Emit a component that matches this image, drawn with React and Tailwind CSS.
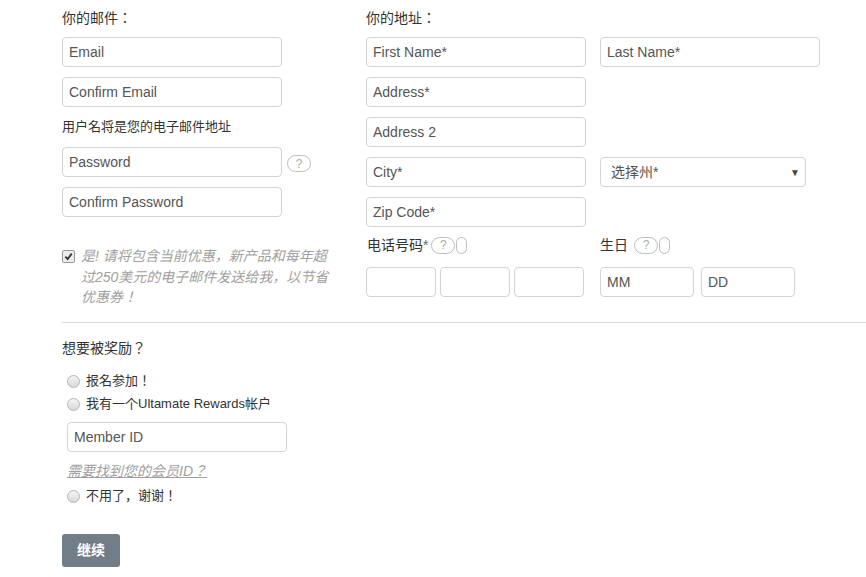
import React from "react";

const font = { fontFamily: '"Liberation Sans", Arial, "Noto Sans CJK JP", "Noto Sans CJK SC", sans-serif' };

function Field({ ph, w = "w-[220px]" }) {
  return (
    <input
      placeholder={ph}
      className={`${w} h-[30px] shrink-0 rounded-[4px] border border-[#d4d4d4] bg-white px-[6px] text-[14px] text-[#333] outline-none placeholder:text-[#555]`}
    />
  );
}

function Help({ extra }) {
  return (
    <span className="flex items-center">
      <span className="flex h-[17px] w-[24px] items-center justify-center rounded-full border border-[#bdbdbd] text-[12px] leading-none text-[#aaa]">?</span>
      {extra && <span className="ml-[1px] h-[17px] w-[11px] rounded-full border border-[#bdbdbd]" />}
    </span>
  );
}

function Radio({ children }) {
  return (
    <div className="flex h-[23px] items-center pl-[5px] text-[13px] text-[#333]">
      <span className="mr-[6px] h-[13px] w-[13px] rounded-full border border-[#b5b5b5] bg-gradient-to-b from-[#f4f4f4] to-[#d9d9d9]" />
      {children}
    </div>
  );
}

export default function App() {
  return (
    <div style={font} className="min-h-[577px] w-[866px] bg-white pt-[8px] text-[14px] text-[#333]">
      <div className="flex pl-[62px]">
        {/* left column */}
        <div className="flex w-[274px] flex-col">
          <div className="mb-[9px] h-[20px] leading-[20px]">你的邮件：</div>
          <Field ph="Email" />
          <div className="mt-[10px]"><Field ph="Confirm Email" /></div>
          <div className="mt-[10px] h-[20px] text-[13px] leading-[20px]">用户名将是您的电子邮件地址</div>
          <div className="mt-[10px] flex items-center gap-[5px]">
            <Field ph="Password" />
            <span className="mt-[3px]"><Help /></span>
          </div>
          <div className="mt-[10px]"><Field ph="Confirm Password" /></div>
          <div className="mt-[29px] flex">
            <span className="mr-[6px] mt-[4px] flex h-[13px] w-[13px] shrink-0 items-center justify-center rounded-[2px] border border-[#9a9a9a] bg-[#ececec]">
              <svg width="9" height="9" viewBox="0 0 10 10"><path d="M1.5 5.2 L4 7.8 L8.6 1.8" stroke="#333" strokeWidth="2" fill="none" /></svg>
            </span>
            <p className="text-[14px] italic leading-[20.5px] text-[#a0a0a0]">是! 请将包含当前优惠，新产品和每年超过250美元的电子邮件发送给我，以节省优惠券！</p>
          </div>
        </div>
        {/* right column */}
        <div className="ml-[30px] flex flex-col">
          <div className="mb-[9px] h-[20px] leading-[20px]">你的地址：</div>
          <div className="flex gap-[14px]">
            <Field ph="First Name*" />
            <Field ph="Last Name*" />
          </div>
          <div className="mt-[10px]"><Field ph="Address*" /></div>
          <div className="mt-[10px]"><Field ph="Address 2" /></div>
          <div className="mt-[10px] flex gap-[14px]">
            <Field ph="City*" />
            <div className="flex h-[30px] w-[206px] items-center justify-between rounded-[4px] border border-[#d4d4d4] bg-white pl-[10px] pr-[5px] text-[14px] text-[#555]">
              <span>选择州*</span>
              <span className="text-[10px] text-[#444]">▼</span>
            </div>
          </div>
          <div className="mt-[10px]"><Field ph="Zip Code*" /></div>
          <div className="mt-[8px] flex gap-[14px]">
            <div className="flex w-[220px] flex-col">
              <div className="flex h-[20px] items-center gap-[3px]">
                <span className="pl-[1px]">电话号码<span className="text-[#666]">*</span></span>
                <Help extra />
              </div>
              <div className="mt-[12px] flex gap-[4px]">
                <Field ph="" w="w-[70px]" />
                <Field ph="" w="w-[70px]" />
                <Field ph="" w="w-[70px]" />
              </div>
            </div>
            <div className="flex flex-col">
              <div className="flex h-[20px] items-center gap-[6px]">
                <span>生日</span>
                <Help extra />
              </div>
              <div className="mt-[12px] flex gap-[7px]">
                <Field ph="MM" w="w-[94px]" />
                <Field ph="DD" w="w-[94px]" />
              </div>
            </div>
          </div>
        </div>
      </div>
      <div className="ml-[62px] mt-[14px] h-px bg-[#dcdcdc]" />
      <div className="flex flex-col pl-[62px]">
        <div className="mt-[15px] h-[20px] leading-[20px]">想要被奖励？</div>
        <div className="mt-[12px]">
          <Radio>报名参加！</Radio>
          <Radio>我有一个Ultamate Rewards帐户</Radio>
        </div>
        <div className="ml-[5px] mt-[6px]"><Field ph="Member ID" /></div>
        <a className="ml-[5px] mt-[9px] h-[20px] text-[14px] italic leading-[20px] text-[#a0a0a0] underline">需要找到您的会员ID？</a>
        <div className="mt-[4px]"><Radio>不用了，谢谢！</Radio></div>
        <button className="mt-[26px] h-[33px] w-[58px] rounded-[3px] bg-[#717e88] text-[14px] font-bold text-white">继续</button>
      </div>
    </div>
  );
}
